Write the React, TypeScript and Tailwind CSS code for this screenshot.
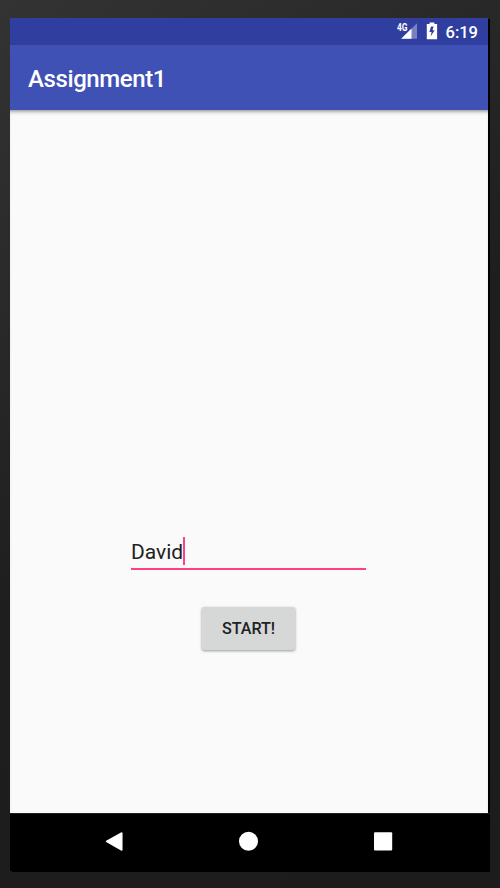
export default function App() {
  return (
    <div className="h-[888px] w-[500px] overflow-hidden bg-linear-[145deg,#333333_0%,#2b2b2b_22%,#1e1e1e_50%,#1c1c1c_100%] pt-[18px] pl-[10px] font-[Roboto,sans-serif]">
      <div className="flex h-[853px] w-[478px] flex-col shadow-[2px_1px_0_#000]">
        <div className="flex h-[27px] shrink-0 items-center justify-end bg-[#303f9f] pr-[10px] text-white">
          <svg className="h-[27px] w-[44px] shrink-0" viewBox="0 0 44 27" fill="#fff">
            <path d="M20 5.2v15.6H4.2z" opacity=".35" />
            <path d="M14.5 10.6v10.2H4.2z" />
            <text x="0" y="12.8" fontSize="10.5" fontWeight="700" textLength="10.5" lengthAdjust="spacingAndGlyphs">4G</text>
            <path fillRule="evenodd" d="M32.6 4.6h4.8V6h2.7v15.2H29.8V6h2.8zM36.6 8.6H34l-1.6 5.4h2.2l-1 4.4 4.1-6.2h-2.2z" />
          </svg>
          <span className="ml-[4px] w-[33px] pt-px text-right text-[16.5px] leading-[27px] font-medium">6:19</span>
        </div>
        <header className="flex h-[65px] shrink-0 items-center bg-[#3f51b5] pt-[3px] pl-[18px]">
          <h1 className="text-[24px] leading-[28px] font-medium tracking-[-0.4px] text-white">Assignment1</h1>
        </header>
        <main className="flex h-[703px] shrink-0 flex-col items-center bg-[#fafafa] pt-[427px] pr-px shadow-[inset_0_4px_4px_-3px_rgba(0,0,0,0.5)]">
          <div className="flex h-[33px] w-[235px] items-start border-b-2 border-[#ff4081] text-[21px] leading-[30px] text-[#212121]">
            <span>David</span>
            <span className="h-[28px] w-[2px] bg-[#ff4081]" />
          </div>
          <button className="mt-[37px] h-[43px] w-[93px] rounded-[2px] bg-[#d6d7d7] pt-[2px] text-[16.2px] font-medium tracking-[-0.1px] text-[#212121] shadow-[0_1px_3px_rgba(0,0,0,0.4)]">START!</button>
        </main>
        <nav className="flex h-[58px] w-[480px] shrink-0 items-start rounded-bl-[1px] border-t border-[#222] bg-black">
          <svg className="h-[57px] w-[480px]" viewBox="0 0 480 57" fill="#fff">
            <path d="M111.8 19v17L96.5 27.4z" stroke="#fff" strokeWidth="1.5" strokeLinejoin="round" />
            <circle cx="238.5" cy="27.2" r="9.5" />
            <rect x="364" y="18.2" width="18.2" height="18.2" rx="1" />
          </svg>
        </nav>
      </div>
    </div>
  );
}
